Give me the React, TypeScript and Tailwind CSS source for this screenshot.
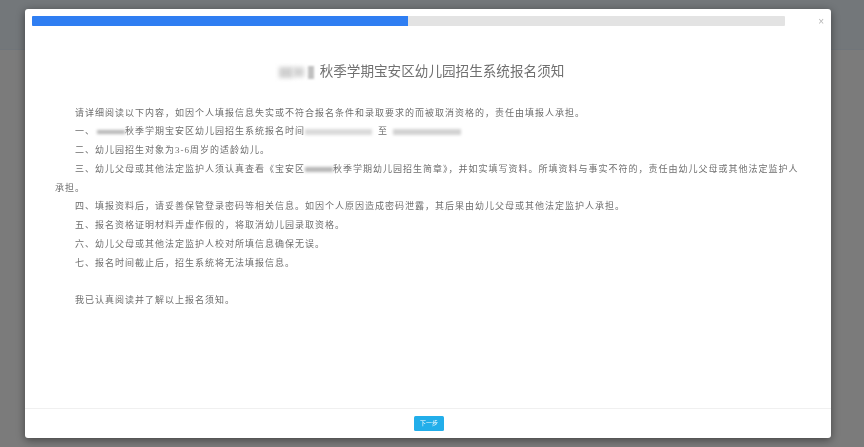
const Blur = ({ w, h = 7, className = "" }: { w: number; h?: number; className?: string }) => (
  <span
    className={`inline-block align-middle bg-[#b5b5b5] blur-[1.5px] ${className}`}
    style={{ width: w, height: h }}
  />
);

const Line = ({ children, indent = true }: { children: React.ReactNode; indent?: boolean }) => (
  <p className={`h-[18.8px] leading-[18.8px] whitespace-nowrap ${indent ? "pl-[20px]" : ""}`}>{children}</p>
);

export default function App() {
  return (
    <div className="relative w-[864px] h-[447px] overflow-hidden bg-[#7b7b7b] font-['Liberation_Serif','Noto_Sans_CJK_SC',serif]">
      <div className="h-[50px] bg-[#73777a] border-b border-[#70757a]" />
      <div className="absolute left-[25px] top-[9px] w-[806px] h-[429px] flex flex-col bg-white rounded-[3px] shadow-[0_2px_8px_rgba(0,0,0,0.45)] blur-[0.35px]">
        <div className="flex items-start pt-[7px] pl-[7px] pr-[6px] h-[33px]">
          <div className="w-[753px] h-[10px] flex bg-[#e3e3e3] rounded-[1px]">
            <div className="w-[376px] bg-[#2f7ef2] rounded-l-[1px]" />
          </div>
          <span className="ml-auto mr-[1px] mt-[1px] text-[10px] leading-[9px] text-[#b5b5b5] font-['Liberation_Sans',sans-serif]">×</span>
        </div>
        <div className="flex-1 pl-[30px] pr-[30px]">
          <h1 className="flex items-center justify-center h-[26px] mt-[17px] pr-[13px] text-[13.6px] leading-[26px] font-normal text-[#707070] whitespace-nowrap">
            <Blur w={14} h={11} className="bg-[#d0d0d0] blur-[2px]" />
            <Blur w={11} h={10} className="bg-[#d4d4d4] blur-[2px]" />
            <Blur w={6} h={13} className="ml-[4px] mr-[6px] bg-[#c0c0c0] blur-[1px]" />
            秋季学期宝安区幼儿园招生系统报名须知
          </h1>
          <div className="mt-[18.5px] text-[9px] tracking-[1px] text-[#6e6e6e]">
            <Line>请详细阅读以下内容，如因个人填报信息失实或不符合报名条件和录取要求的而被取消资格的，责任由填报人承担。</Line>
            <Line>
              一、<Blur w={28} h={4} className="ml-[2px]" />秋季学期宝安区幼儿园招生系统报名时间
              <Blur w={67} h={6} className="bg-[#dadada]" />
              <span className="ml-[6px] mr-[5px]">至</span>
              <Blur w={68} h={6} className="bg-[#d2d2d2]" />
            </Line>
            <Line>二、幼儿园招生对象为3-6周岁的适龄幼儿。</Line>
            <Line>
              三、幼儿父母或其他法定监护人须认真查看《宝安区<Blur w={28} h={5} />秋季学期幼儿园招生简章》，并如实填写资料。所填资料与事实不符的，责任由幼儿父母或其他法定监护人
            </Line>
            <Line indent={false}>承担。</Line>
            <Line>四、填报资料后，请妥善保管登录密码等相关信息。如因个人原因造成密码泄露，其后果由幼儿父母或其他法定监护人承担。</Line>
            <Line>五、报名资格证明材料弄虚作假的，将取消幼儿园录取资格。</Line>
            <Line>六、幼儿父母或其他法定监护人校对所填信息确保无误。</Line>
            <Line>七、报名时间截止后，招生系统将无法填报信息。</Line>
            <div className="h-[18.8px]" />
            <Line>我已认真阅读并了解以上报名须知。</Line>
          </div>
        </div>
        <div className="h-[30px] border-t border-[#f0f0f0] flex items-start justify-center pt-[7px] pl-[2px]">
          <button className="w-[30px] h-[15px] rounded-[1.5px] bg-[#22aeea] text-white text-[6px] leading-[15px] text-center">下一步</button>
        </div>
      </div>
    </div>
  );
}
